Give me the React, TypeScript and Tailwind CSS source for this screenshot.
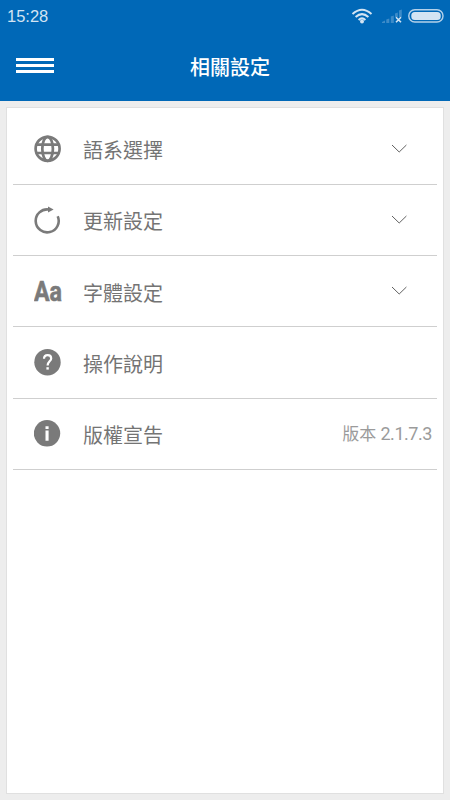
import React from "react";

function GlobeIcon() {
  return (
    <svg width="28" height="28" viewBox="0 0 28 28" fill="none" stroke="#7a7a7a" strokeWidth="2.7">
      <circle cx="13.6" cy="13.8" r="12" />
      <ellipse cx="13.6" cy="13.8" rx="5.3" ry="12" />
      <path d="M2.6 9.6h22M2.6 18h22" />
    </svg>
  );
}

function RefreshIcon() {
  return (
    <svg width="28" height="28" viewBox="0 0 28 28" fill="none">
      <path d="M23.7 10.2A11.5 11.5 0 1 1 14.8 3.5" stroke="#7a7a7a" strokeWidth="2.6" />
      <path d="M14 0.4L19.6 3.6L14 6.6Z" fill="#7a7a7a" />
    </svg>
  );
}

function FontIcon() {
  return (
    <svg width="32" height="34" viewBox="0 0 32 34">
      <text
        x="0"
        y="27"
        textLength="28"
        lengthAdjust="spacingAndGlyphs"
        fill="#7a7a7a"
        stroke="#7a7a7a"
        strokeWidth="0.6"
        fontSize="27.5"
        fontWeight="700"
        fontFamily="Roboto, sans-serif"
      >
        Aa
      </text>
    </svg>
  );
}

function HelpIcon() {
  return (
    <svg width="28" height="28" viewBox="0 0 28 28" fill="none">
      <circle cx="13.5" cy="14.2" r="13.2" fill="#7a7a7a" />
      <path
        d="M10 10.8C10 8.5 11.4 7.2 13.6 7.2C15.8 7.2 17.2 8.5 17.2 10.4C17.2 13.2 13.6 13.6 13.6 17.4"
        stroke="#fff"
        strokeWidth="2.2"
      />
      <path d="M12.4 19.2h2.4v2.4h-2.4z" fill="#fff" />
    </svg>
  );
}

function InfoIcon() {
  return (
    <svg width="28" height="28" viewBox="0 0 28 28">
      <circle cx="13" cy="13.3" r="13.2" fill="#7a7a7a" />
      <path d="M11.5 6.3h3.1v2.8h-3.1zM11.5 10.5h3.1v10.3h-3.1z" fill="#fff" />
    </svg>
  );
}

function ChevronIcon() {
  return (
    <svg width="16" height="10" viewBox="0 0 16 10" fill="none" stroke="#606060" strokeWidth="1">
      <path d="M1 1L8.2 8L15.4 1" />
    </svg>
  );
}

const items = [
  { label: "語系選擇", icon: <GlobeIcon />, expandable: true },
  { label: "更新設定", icon: <RefreshIcon />, expandable: true },
  { label: "字體設定", icon: <FontIcon />, expandable: true },
  { label: "操作說明", icon: <HelpIcon /> },
  { label: "版權宣告", icon: <InfoIcon />, version: "2.1.7.3" },
];

function StatusBar() {
  return (
    <div className="flex h-8 items-center justify-between pl-[7px] pr-[6px] text-[#d3e4f3]">
      <span className="font-['Liberation_Sans',sans-serif] text-[16.5px] leading-8">15:28</span>
      <div className="flex items-center">
        <svg width="22" height="16" viewBox="0 0 22 16" fill="none" stroke="#d3e4f3" strokeWidth="2">
          <path d="M1.5 6Q11 -2.6 20.5 6" />
          <path d="M4.6 9Q11 3.2 17.4 9" />
          <path d="M7.6 11.9Q11 8.8 14.4 11.9" />
          <circle cx="11" cy="13.4" r="2" fill="#d3e4f3" stroke="none" />
        </svg>
        <svg width="22" height="16" viewBox="0 0 22 16" className="ml-2">
          <path
            d="M1 14l3-1.5V15H1zM5.3 11.5l3-1V15h-3zM9.8 8.5l3-1V15h-3zM14 5.5l2.8-1V9H14zM18 2.5l2.8-1V9H18z"
            fill="#3d8bc8"
          />
          <path d="M15 9.2l5 5M20 9.2l-5 5" stroke="#d3e4f3" strokeWidth="1.6" />
        </svg>
        <svg width="36" height="14" viewBox="0 0 36 14" className="ml-[5px]">
          <rect x="0.8" y="0.8" width="34.2" height="12.2" rx="6" fill="none" stroke="#b4d1ea" strokeWidth="1.4" />
          <rect x="3.3" y="3" width="29.4" height="8" rx="3.5" fill="#d3e4f3" />
        </svg>
      </div>
    </div>
  );
}

function App() {
  return (
    <div className="flex h-[800px] w-[450px] flex-col bg-[#ededed] font-[Roboto,'Noto_Sans_CJK_TC',sans-serif]">
      <header className="h-[101px] bg-[#0068b7]">
        <StatusBar />
        <div className="grid h-[69px] grid-cols-[54px_1fr_54px] items-center">
          <div className="flex flex-col gap-[3px] pb-[2px] pl-4">
            <div className="h-[3px] bg-white" />
            <div className="h-[3px] bg-white" />
            <div className="h-[3px] bg-white" />
          </div>
          <h1 className="pl-[10px] pt-[2px] text-center text-xl font-medium text-white">相關設定</h1>
        </div>
      </header>
      <main className="mx-[6px] mt-[6px] h-[687px] border border-[#e0e0e0] bg-white px-[6px] pt-[5.5px]">
        {items.map((item) => (
          <div key={item.label} className="flex h-[71.25px] items-center border-b border-[#cfcfcf]">
            <div className="w-[70px] shrink-0 pl-[21px]">{item.icon}</div>
            <div className="flex-1 pt-[5px] text-xl text-[#747474]">{item.label}</div>
            {item.expandable && (
              <div className="pr-[30px]">
                <ChevronIcon />
              </div>
            )}
            {item.version && (
              <div className="pr-[5px] pt-[1px] text-[17px] text-[#9b9b9b]">
                版本 <span className="text-[18px] tracking-[-0.45px]">{item.version}</span>
              </div>
            )}
          </div>
        ))}
      </main>
    </div>
  );
}

export default App;
